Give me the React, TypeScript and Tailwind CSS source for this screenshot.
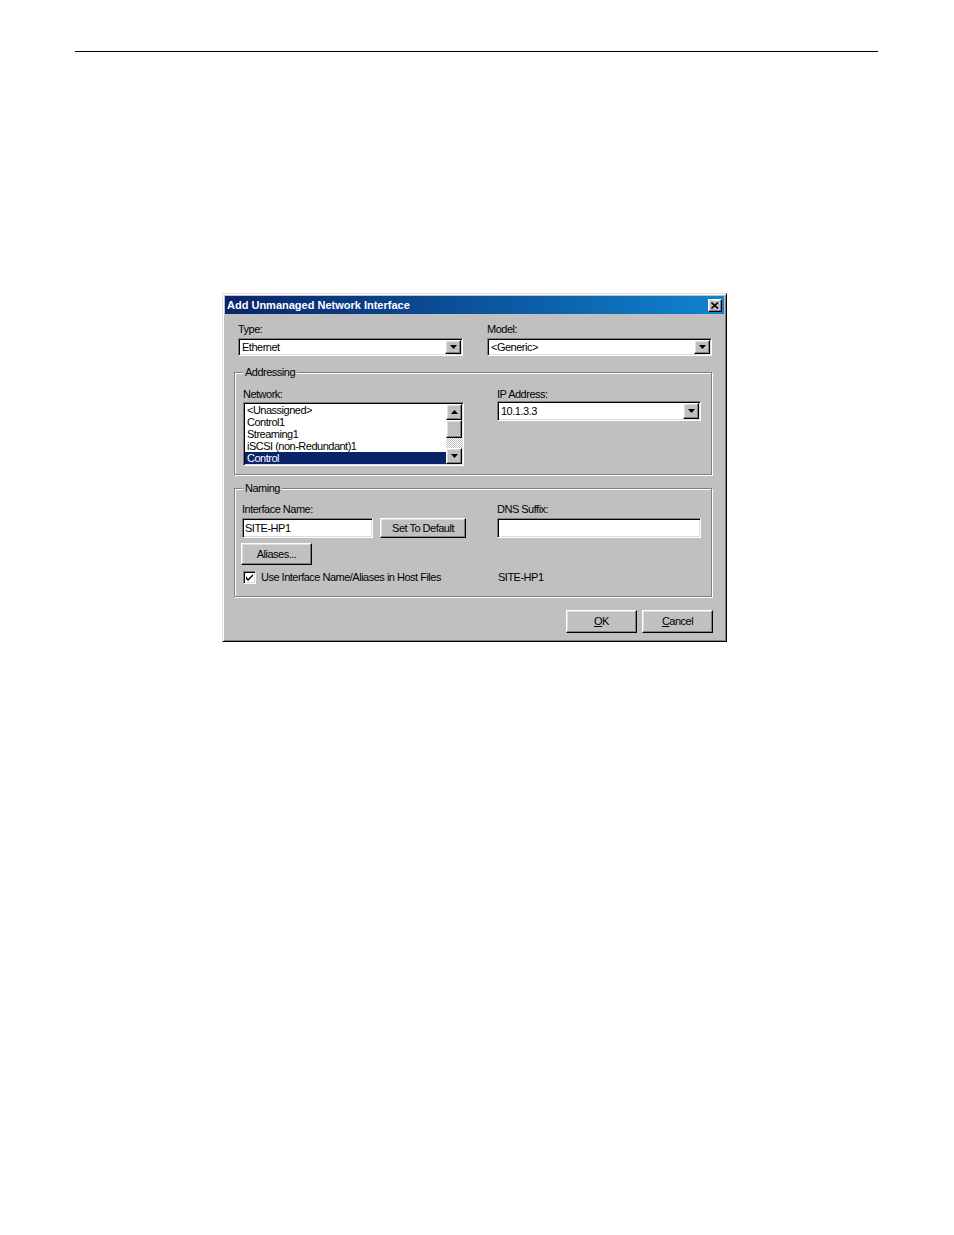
import React from "react";

const sunken =
    "border border-t-[#808080] border-l-[#808080] border-r-white border-b-white shadow-[inset_1px_1px_0_#000,inset_-1px_-1px_0_#dfdfdf]";
const raised =
    "border border-t-white border-l-white border-r-black border-b-black shadow-[inset_-1px_-1px_0_#808080,inset_1px_1px_0_#dfdfdf] bg-[#c0c0c0]";
const label = "h-[13px] leading-[13px] text-[11px] tracking-[-0.5px] whitespace-nowrap";

function Arrow({ up = false }: { up?: boolean }) {
    return (
        <svg width="7" height="4" viewBox="0 0 7 4" className={up ? "rotate-180" : ""}>
            <polygon points="0,0 7,0 3.5,4" fill="#000" />
        </svg>
    );
}

function Combo({ value, width, height }: { value: string; width: string; height: string }) {
    return (
        <div className={`${sunken} ${width} ${height} bg-white p-[1px] flex`}>
            <div className={`${label} flex-1 pl-[2px] self-center`}>{value}</div>
            <div className={`${raised} w-[16px] h-full flex items-center justify-center`}>
                <Arrow />
            </div>
        </div>
    );
}

function Button({ children, width, height }: { children: React.ReactNode; width: string; height: string }) {
    return (
        <div className={`${raised} ${width} ${height} flex items-center justify-center`}>
            <span className={label}>{children}</span>
        </div>
    );
}

function GroupBox({ title, height, children }: { title: string; height: string; children: React.ReactNode }) {
    return (
        <div
            className={`relative ml-[9px] w-[478px] ${height} border border-[#808080] shadow-[inset_1px_1px_0_#fff,1px_1px_0_#fff]`}
        >
            <span className={`${label} absolute -top-[7px] left-[8px] px-[2px] bg-[#c0c0c0]`}>{title}</span>
            {children}
        </div>
    );
}

export default function App() {
    const networks = ["<Unassigned>", "Control1", "Streaming1", "iSCSI (non-Redundant)1", "Control"];

    return (
        <div className="w-[954px] min-h-[1235px] bg-white font-['Liberation_Sans',Arial,sans-serif] text-black overflow-hidden">
            {/* page rule */}
            <div className="mt-[51px] ml-[75px] w-[803px] h-[1px] bg-black" />

            {/* Dialog */}
            <div className="mt-[241px] ml-[222px] w-[505px] h-[349px] bg-[#c0c0c0] p-[2px] border border-t-[#dfdfdf] border-l-[#dfdfdf] border-r-black border-b-black shadow-[inset_1px_1px_0_#fff,inset_-1px_-1px_0_#808080]">
                {/* Title bar */}
                <div className="h-[18px] bg-gradient-to-r from-[#0a246a] to-[#1084d0] flex items-center justify-between pl-[2px] pr-[2px]">
                    <span className="text-[11px] font-bold text-white leading-[13px] whitespace-nowrap">
                        Add Unmanaged Network Interface
                    </span>
                    <div className={`${raised} w-[14px] h-[13px] flex items-center justify-center`}>
                        <svg width="8" height="7" viewBox="0 0 8 7">
                            <path d="M0.5 0.5 L7 6.5 M7 0.5 L0.5 6.5" stroke="#000" strokeWidth="1.6" />
                        </svg>
                    </div>
                </div>

                {/* Type / Model */}
                <div className="pt-[9px] pl-[13px] flex gap-[24px]">
                    <div className="flex flex-col gap-[2px]">
                        <div className={label}>Type:</div>
                        <Combo value="Ethernet" width="w-[225px]" height="h-[18px]" />
                    </div>
                    <div className="flex flex-col gap-[2px]">
                        <div className={label}>Model:</div>
                        <Combo value="<Generic>" width="w-[225px]" height="h-[18px]" />
                    </div>
                </div>

                {/* Addressing */}
                <div className="mt-[16px]">
                    <GroupBox title="Addressing" height="h-[103px]">
                        <div className="pt-[15px] pl-[8px] flex gap-[33px]">
                            <div className="flex flex-col gap-[1px]">
                                <div className={label}>Network:</div>
                                <div className={`${sunken} w-[221px] h-[64px] bg-white p-[1px] flex`}>
                                    <div className="flex-1 flex flex-col">
                                        {networks.map((n, i) => (
                                            <div
                                                key={n}
                                                className={`h-[12px] leading-[12px] text-[11px] tracking-[-0.5px] pl-[2px] whitespace-nowrap ${
                                                    i === networks.length - 1 ? "bg-[#0a246a] text-white" : ""
                                                }`}
                                            >
                                                {n}
                                            </div>
                                        ))}
                                    </div>
                                    <div className="w-[16px] flex flex-col">
                                        <div className={`${raised} h-[16px] flex items-center justify-center`}>
                                            <Arrow up />
                                        </div>
                                        <div className={`${raised} h-[18px]`} />
                                        <div className="flex-1 bg-[repeating-conic-gradient(#fff_0_25%,#c0c0c0_0_50%)] bg-[length:2px_2px]" />
                                        <div className={`${raised} h-[16px] flex items-center justify-center`}>
                                            <Arrow />
                                        </div>
                                    </div>
                                </div>
                            </div>
                            <div className="flex flex-col">
                                <div className={label}>IP Address:</div>
                                <Combo value="10.1.3.3" width="w-[204px]" height="h-[20px]" />
                            </div>
                        </div>
                    </GroupBox>
                </div>

                {/* Naming */}
                <div className="mt-[13px]">
                    <GroupBox title="Naming" height="h-[109px]">
                        <div className="pt-[14px] pl-[7px] flex">
                            <div className="w-[255px] flex flex-col">
                                <div className={label}>Interface Name:</div>
                                <div className="mt-[2px] flex gap-[7px]">
                                    <div className={`${sunken} w-[131px] h-[20px] bg-white flex items-center`}>
                                        <span className={`${label} pl-[2px]`}>SITE-HP1</span>
                                    </div>
                                    <Button width="w-[86px]" height="h-[20px]">Set To Default</Button>
                                </div>
                                <div className="mt-[5px] -ml-[1px]">
                                    <Button width="w-[71px]" height="h-[22px]">Aliases...</Button>
                                </div>
                                <div className="mt-[6px] ml-[1px] flex items-center gap-[5px]">
                                    <div className={`${sunken} w-[13px] h-[13px] bg-white flex items-center justify-center`}>
                                        <svg width="7" height="7" viewBox="0 0 7 7">
                                            <path d="M0 2 L0 5 L2 7 L7 2 L7 0 L2 5 Z" fill="#000" />
                                        </svg>
                                    </div>
                                    <span className={label}>Use Interface Name/Aliases in Host Files</span>
                                </div>
                            </div>
                            <div className="flex flex-col">
                                <div className={label}>DNS Suffix:</div>
                                <div className={`${sunken} mt-[2px] w-[204px] h-[20px] bg-white`} />
                                <div className={`${label} mt-[33px] pl-[1px]`}>SITE-HP1</div>
                            </div>
                        </div>
                    </GroupBox>
                </div>

                {/* OK / Cancel */}
                <div className="mt-[13px] pr-[11px] flex justify-end gap-[5px]">
                    <Button width="w-[71px]" height="h-[23px]">
                        <span className="underline">O</span>K
                    </Button>
                    <Button width="w-[71px]" height="h-[23px]">
                        <span className="underline">C</span>ancel
                    </Button>
                </div>
            </div>
        </div>
    );
}
